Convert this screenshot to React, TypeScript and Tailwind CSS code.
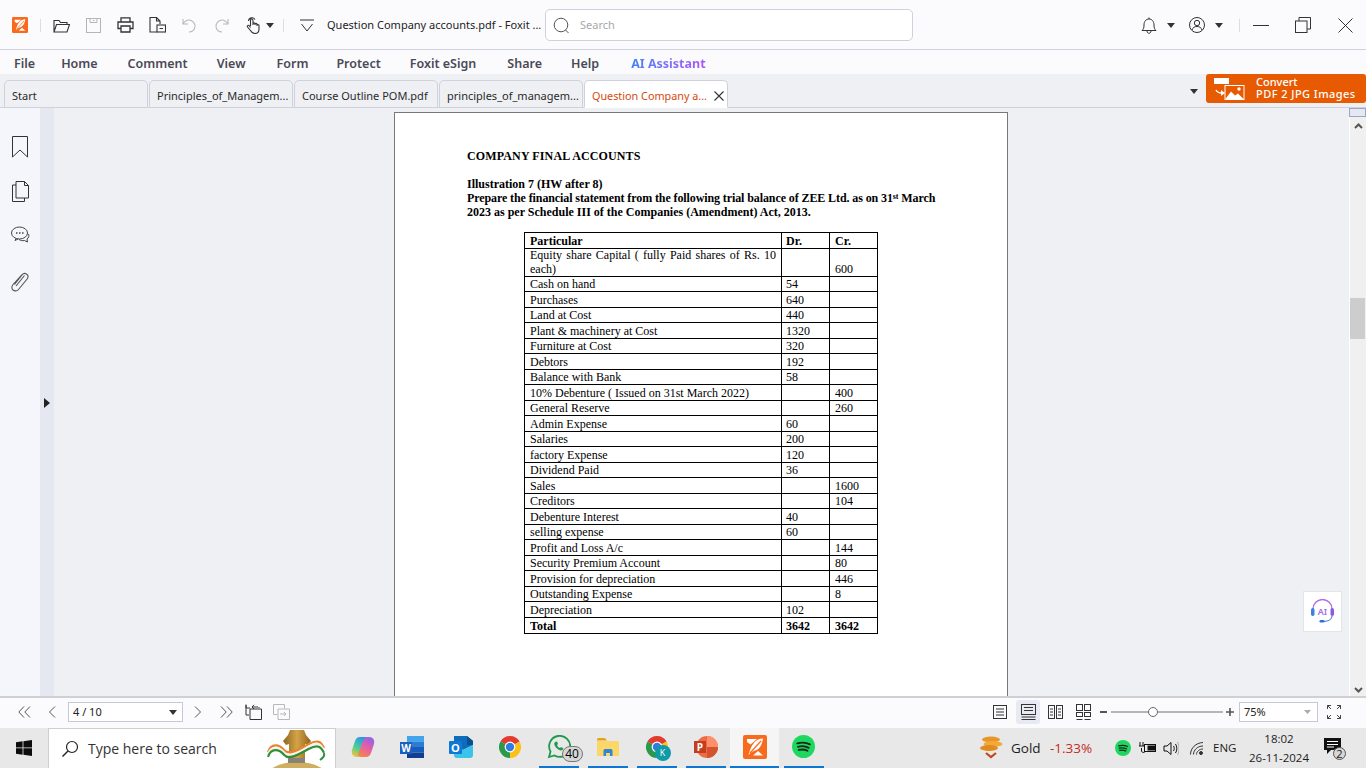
import React from "react";

const UI = "[font-family:'Noto_Sans',sans-serif]";
const SERIF = "[font-family:'Liberation_Serif',serif]";

type R = { p: string; d?: string; c?: string; bold?: boolean };
const rows: R[] = [
  { p: "Cash on hand", d: "54" },
  { p: "Purchases", d: "640" },
  { p: "Land at Cost", d: "440" },
  { p: "Plant & machinery at Cost", d: "1320" },
  { p: "Furniture at Cost", d: "320" },
  { p: "Debtors", d: "192" },
  { p: "Balance with Bank", d: "58" },
  { p: "10% Debenture ( Issued on 31st March 2022)", c: "400" },
  { p: "General Reserve", c: "260" },
  { p: "Admin Expense", d: "60" },
  { p: "Salaries", d: "200" },
  { p: "factory Expense", d: "120" },
  { p: "Dividend Paid", d: "36" },
  { p: "Sales", c: "1600" },
  { p: "Creditors", c: "104" },
  { p: "Debenture Interest", d: "40" },
  { p: "selling expense", d: "60" },
  { p: "Profit and Loss A/c", c: "144" },
  { p: "Security Premium Account", c: "80" },
  { p: "Provision for depreciation", c: "446" },
  { p: "Outstanding Expense", c: "8" },
  { p: "Depreciation", d: "102" },
  { p: "Total", d: "3642", c: "3642", bold: true },
];

function Caret({ className = "" }: { className?: string }) {
  return (
    <svg width="8" height="5" viewBox="0 0 8 5" className={className}>
      <path d="M0 0h8L4 5z" fill="#333" />
    </svg>
  );
}

function Ic({ w, h, vb, ml, children, cls = "" }: { w: number; h: number; vb?: string; ml?: string; children: React.ReactNode; cls?: string }) {
  return (
    <svg width={w} height={h} viewBox={vb ?? `0 0 ${w} ${h}`} fill="none" stroke="#333" strokeWidth="1" className={`shrink-0 ${ml ?? ""} ${cls}`}>
      {children}
    </svg>
  );
}

function FoxitLogo({ size }: { size: number }) {
  return (
    <svg width={size} height={size} viewBox="0 0 24 24" className="shrink-0">
      <rect width="24" height="24" rx="2" fill="#f96b1c" />
      <path d="M20 3.500c-7 .5-11 4-14.500 16.500 2.500-3 5-4 8-5 3.500-1.500 5.500-5.500 6.500-11.500z" fill="#fff" />
      <path d="M4 4h10L7.500 9.500 4 7z" fill="#fff" />
      <path d="M15 16l5 4.500H10z" fill="#fff" />
      <path d="M18 6L7 18" stroke="#f96b1c" strokeWidth="1.200" />
    </svg>
  );
}

function Chrome({ size = 24 }: { size?: number }) {
  return (
    <svg width={size} height={size} viewBox="0 0 24 24" className="shrink-0">
      <path d="M12 12L2.470 6.500A11 11 0 0 1 21.530 6.500Z" fill="#e33b2e" />
      <path d="M12 12L21.530 6.500A11 11 0 0 1 12 23Z" fill="#fbc117" />
      <path d="M12 12L12 23A11 11 0 0 1 2.470 6.500Z" fill="#2a9a4a" />
      <circle cx="12" cy="12" r="5.400" fill="#fff" />
      <circle cx="12" cy="12" r="4.200" fill="#2f7de1" />
    </svg>
  );
}

function Spotify({ size }: { size: number }) {
  return (
    <svg width={size} height={size} viewBox="0 0 24 24" fill="none" className="shrink-0">
      <circle cx="12" cy="12" r="12" fill="#1ed760" />
      <path d="M5.500 8.800c4.500-1.300 9.500-1 13.200 1M6.200 12.300c3.800-1 8-.7 11.200 1.100M7 15.600c3.200-.8 6.500-.5 9.200.9" stroke="#14261a" strokeWidth="1.900" strokeLinecap="round" />
    </svg>
  );
}

function Tab({ label, active }: { label: string; active?: boolean }) {
  return (
    <div className={`relative flex items-center h-[28px] w-[144px] pl-[7px] pt-[5px] rounded-t-[5px] border border-[#cfd1dc] -mb-px ${active ? "text-[10.800px] bg-white border-b-white text-[#d4490c]" : "text-[11px] bg-[#eff0f4] text-[#2a2a2a]"}`}>
      <span className="whitespace-nowrap">{label}</span>
      {active && (
        <svg width="10" height="10" viewBox="0 0 10 10" className="absolute right-[3px] top-[10px]">
          <path d="M.5.500l9 9M9.500.500l-9 9" stroke="#333" strokeWidth="1.100" />
        </svg>
      )}
    </div>
  );
}

function Cell({ w, children, last, pl }: { w?: string; children?: React.ReactNode; last?: boolean; pl?: string }) {
  return (
    <div className={`${w ?? ""} ${last ? "flex-1 pl-[5px]" : "border-r border-black"} ${pl ?? (last ? "" : "pl-[4px]")} self-stretch flex items-end`}>
      <span className="leading-[14px] block">{children}</span>
    </div>
  );
}

function Page() {
  return (
    <div className={`w-[614px] h-[600px] shrink-0 bg-white border border-[#777] border-b-0 mt-[4px] pl-[72px] pt-[36px] text-black text-[12px] leading-[14px] ${SERIF}`}>
      <div className="font-bold h-[14px] tracking-[0.13px]">COMPANY FINAL ACCOUNTS</div>
      <div className="font-bold h-[14px] mt-[14px]">Illustration 7 (HW after 8)</div>
      <div className="font-bold h-[14px] w-[468px] whitespace-nowrap tracking-[-0.1px]">
        Prepare the financial statement from the following trial balance of ZEE Ltd. as on 31<span className="text-[8px] relative -top-[3px]">st</span> March
      </div>
      <div className="font-bold h-[14px]">2023 as per Schedule III of the Companies (Amendment) Act, 2013.</div>
      <div className="ml-[57px] mt-[13px] w-[354px] border border-black">
        <div className="flex h-[16px] border-b border-black font-bold">
          <Cell w="w-[257px]" pl="pl-[5px]">Particular</Cell>
          <Cell w="w-[48px]">Dr.</Cell>
          <Cell last>Cr.</Cell>
        </div>
        <div className="flex h-[27.9px] border-b border-black">
          <div className="w-[257px] border-r border-black pl-[5px] pr-[5px] leading-[14px]">
            <div className="-mt-[1px] text-justify [text-align-last:justify]">Equity share Capital ( fully Paid shares of Rs. 10</div>
            <div>each)</div>
          </div>
          <Cell w="w-[48px]" />
          <Cell last>600</Cell>
        </div>
        {rows.map((r, i) => (
          <div key={r.p} className={`flex h-[15.5px] ${i < rows.length - 1 ? "border-b border-black" : ""} ${r.bold ? "font-bold" : ""}`}>
            <Cell w="w-[257px]" pl="pl-[5px]">{r.p}</Cell>
            <Cell w="w-[48px]">{r.d}</Cell>
            <Cell last>{r.c}</Cell>
          </div>
        ))}
      </div>
    </div>
  );
}

function TopBar() {
  return (
    <div className="flex items-center h-[50px] pt-[1px] border-b border-[#cfd1dc] bg-[#fbfbfd] text-[#222]">
      <div className="ml-[12px]"><FoxitLogo size={16} /></div>
      <div className="ml-[12px] w-px h-[13px] bg-[#dcdde3]" />
      <Ic w={17} h={15} ml="ml-[12px]"><path d="M1 14V2.500h5l1.500 2H14v2M1 14l2.500-7.500H16.500L14 14z" strokeWidth="1.100" /></Ic>
      <Ic w={15} h={15} ml="ml-[16px]"><g stroke="#b5b5b5"><rect x=".5" y=".5" width="14" height="14" /><path d="M4 .5v4h7v-4M7 2.500h1.500" /></g></Ic>
      <Ic w={17} h={16} ml="ml-[16px]"><path d="M4 5V.8h9V5M4 11.500H1V5h15v6.500h-3M4 9h9v6H4z" strokeWidth="1.300" /></Ic>
      <Ic w={17} h={16} ml="ml-[15px]"><path d="M8 15H1V.5h6.500L11 4v3M7.500.5V4H11" strokeWidth="1.100" /><rect x="8" y="8" width="8.500" height="7" strokeWidth="1.100" /><path d="M10.500 11.500h3.500" /></Ic>
      <Ic w={14} h={15} ml="ml-[16px]"><g stroke="#b8b8b8" strokeWidth="1.100"><path d="M1 1v5h5M1 6c2-3 4-4 6-4 3 0 6 3 6 6 0 3.500-2.500 6-6 6" /></g></Ic>
      <Ic w={14} h={15} ml="ml-[19px]"><g stroke="#b8b8b8" strokeWidth="1.100"><path d="M13 1v5H8M13 6c-2-3-4-4-6-4-3 0-6 3-6 6 0 3.500 2.500 6 6 6" /></g></Ic>
      <Ic w={14} h={17} ml="ml-[17px]"><path d="M4.500 9V3.500c0-2 2.500-2 2.500 0V8m0-1c0-1.500 2-1.500 2 0v1m0-.5c0-1.500 2-1.500 2 0V9m0-.5c0-1.500 2-1 2 0V12c0 3-2 4.500-4 4.500-2.500 0-3.500-1-4.500-3L1.500 10c-.8-1.500 1-2.500 2-1l1 1.500M2.500 4a3.500 3.500 0 0 1 6.500-1.500" strokeWidth="1.100" /></Ic>
      <Caret className="ml-[6px]" />
      <div className="ml-[9px] w-px h-[13px] bg-[#dcdde3]" />
      <Ic w={14} h={13} ml="ml-[16px]"><path d="M0 1h14M1.500 5L7 12l5.500-7" /></Ic>
      <div className="ml-[13px] w-[210px] text-[11px] whitespace-nowrap">Question Company accounts.pdf - Foxit ...</div>
      <div className="ml-[8px] w-[368px] h-[32px] flex items-center border border-[#cfd1dc] rounded-[5px] bg-white">
        <Ic w={17} h={17} ml="ml-[7px]"><circle cx="8" cy="8" r="6.800" stroke="#555" /><path d="M12.500 13l3 3" stroke="#555" /></Ic>
        <span className="ml-[10px] text-[11px] text-[#a8a8a8]">Search</span>
      </div>
      <Ic w={16} h={17} ml="ml-[228px]"><path d="M1 13.500c1.500-1.500 2-2.500 2-5.500 0-3.500 2-6 5-6s5 2.500 5 6c0 3 .5 4 2 5.500zM6 14c0 3 4 3 4 0M8 .5v1.500" /></Ic>
      <Caret className="ml-[10px]" />
      <Ic w={16} h={16} ml="ml-[14px]"><circle cx="8" cy="8" r="7.500" /><circle cx="8" cy="6" r="2.700" /><path d="M3 13c.8-2.500 2.500-3.500 5-3.500s4.200 1 5 3.500" /></Ic>
      <Caret className="ml-[10px]" />
      <div className="ml-[16px] w-px h-[13px] bg-[#dcdde3]" />
      <div className="ml-[13px] w-[16px] h-px bg-[#333]" />
      <Ic w={16} h={16} ml="ml-[26px]"><rect x=".5" y="4" width="11.500" height="11.500" /><path d="M4 4V.5h11.500V12H12" /></Ic>
      <Ic w={15} h={15} ml="ml-[27px]"><path d="M.5.500l14 14M14.500.500l-14 14" /></Ic>
    </div>
  );
}

function MenuBar() {
  return (
    <div className="flex items-center h-[24px] bg-[#fbfbfd] text-[12.500px] font-semibold text-[#4a4a56] pt-[5px]">
      <span className="ml-[14px]">File</span>
      <span className="ml-[26px]">Home</span>
      <span className="ml-[30px]">Comment</span>
      <span className="ml-[29px]">View</span>
      <span className="ml-[31px]">Form</span>
      <span className="ml-[28px]">Protect</span>
      <span className="ml-[29px]">Foxit eSign</span>
      <span className="ml-[31px]">Share</span>
      <span className="ml-[29px]">Help</span>
      <span className="ml-[32px] font-bold bg-gradient-to-r from-[#3b82f6] to-[#a855f7] bg-clip-text text-transparent">AI Assistant</span>
    </div>
  );
}

function TabStrip() {
  return (
    <div className="flex items-end h-[34px] bg-[#eff0f4] border-b border-[#cfd1dc] pl-[4px] relative">
      <div className="flex gap-[1px]">
        <Tab label="Start" />
        <Tab label="Principles_of_Managem..." />
        <Tab label="Course Outline POM.pdf" />
        <Tab label="principles_of_managem..." />
        <Tab label="Question Company a..." active />
      </div>
      <div className="flex-1" />
      <div className="self-start flex items-center">
        <Caret className="mr-[8px] mt-[6px]" />
        <div className="w-[160px] h-[29px] bg-[#e85a02] rounded-[3px] flex items-center text-white">
          <svg width="32" height="24" viewBox="0 0 32 24" className="ml-[8px] shrink-0">
            <rect x="0" y="1" width="15" height="6" fill="#fff" />
            <path d="M2 13c1 2 3 3 6 3" stroke="#fff" strokeWidth="1.500" fill="none" />
            <path d="M7 13l4 3-4 3z" fill="#fff" />
            <rect x="11" y="8.500" width="19" height="14" fill="none" stroke="#fff" />
            <path d="M11 22.500l6-8 4 4 3-2 6 6z" fill="#fff" />
            <circle cx="25" cy="12" r="1.700" fill="#fff" />
          </svg>
          <div className="ml-[10px] pb-[2px] text-[11px] font-medium leading-[12px] whitespace-nowrap">
            <div>Convert</div>
            <div className="tracking-[0.45px]">PDF 2 JPG Images</div>
          </div>
        </div>
      </div>
    </div>
  );
}

function Sidebar() {
  return (
    <div className="w-[40px] shrink-0 bg-[#f5f6fb] flex flex-col items-center pt-[28px]">
      <svg width="16" height="22" viewBox="0 0 16 22" fill="none" stroke="#333"><path d="M1 .5h14.500v20.500L8 14 .5 21V.5z" /></svg>
      <svg width="17" height="21" viewBox="0 0 17 21" fill="none" stroke="#333" className="mt-[23px]"><path d="M4 4H.5v16.500h12V17M4 .5V17h12.500V4.500l-4-4zM12.500.5v4h4" /></svg>
      <svg width="19" height="18" viewBox="0 0 19 18" fill="none" stroke="#444" className="mt-[24px]"><ellipse cx="8.500" cy="7" rx="8" ry="6" /><path d="M5 12.500l-1 2 3-1.500M17.500 8c1 2 0 4-1.500 5l.5 3-3-1.500c-2 .5-4 0-5.500-1" /><path d="M5 7h1.500M8 7h1.500M11 7h1.500" strokeWidth="1.400" /></svg>
      <svg width="18" height="20" viewBox="0 0 18 20" fill="none" stroke="#555" className="mt-[28px]"><path d="M3.500 12.500L11 3c2.500-3.500 7.500-.5 5.500 3.500L7.500 17.500c-2 2.500-7.500 1.500-6.500-3 .2-1 .8-1.700 1.500-2.500L11 2.500M5 14l8.500-10.500" strokeWidth="1.100" /></svg>
    </div>
  );
}

function Scrollbar() {
  return (
    <div className="w-[17px] shrink-0 bg-[#f0f0f0] border-l border-white flex flex-col relative">
      <div className="h-[9px] w-[17px] -ml-px bg-[#e4e8f4] border border-[#a1a5bb]" />
      <svg width="9" height="6" viewBox="0 0 9 6" className="ml-[4px] mt-[6px]"><path d="M1 5l3.500-3.500L8 5" stroke="#555" strokeWidth="2" fill="none" /></svg>
      <div className="mt-[169px] h-[41px] w-[15px] bg-[#cdcdcd]" />
      <div className="flex-1" />
      <svg width="9" height="6" viewBox="0 0 9 6" className="ml-[4px] mb-[3px]"><path d="M1 1l3.500 3.500L8 1" stroke="#555" strokeWidth="2" fill="none" /></svg>
    </div>
  );
}

function Main() {
  return (
    <div className="flex h-[588px] relative overflow-hidden">
      <Sidebar />
      <div className="w-[14px] shrink-0 bg-[#e6e8f1] flex items-center pl-[4px] pt-[2px]">
        <svg width="6" height="10" viewBox="0 0 6 10"><path d="M0 0l6 5-6 5z" fill="#222" /></svg>
      </div>
      <div className="flex-1 bg-[#eff0f4] flex justify-center overflow-hidden pr-[1px]">
        <Page />
      </div>
      <Scrollbar />
      <div className="absolute left-[1303px] top-[483px] w-[39px] h-[41px] bg-white border border-[#e4e5ea] flex items-center justify-center">
        <svg width="25" height="25" viewBox="0 0 25 25" fill="none">
          <path d="M3 13V10a9.500 9.500 0 0 1 19 0v3" stroke="#b06ae8" strokeWidth="1.300" />
          <rect x="1" y="9" width="3.500" height="8" rx="1.700" fill="#3f7fe0" />
          <rect x="20.500" y="9" width="3.500" height="8" rx="1.700" fill="#8a5ce6" />
          <path d="M22 17c0 3-3 5-8 5.500" stroke="#2f6fd6" />
          <rect x="9.500" y="21" width="5" height="2.600" rx="1.300" fill="#2f6fd6" />
          <text x="12.500" y="16" textAnchor="middle" fontSize="9" fontWeight="600" fill="#9b6cf0" stroke="none" fontFamily="Noto Sans">AI</text>
        </svg>
      </div>
    </div>
  );
}

function BottomBar() {
  return (
    <div className="flex items-center h-[32px] pb-[2px] border-t-2 border-[#cfd0d6] bg-[#fbfbfd] text-[#222]">
      <Ic w={13} h={12} ml="ml-[18px]"><path d="M6 .5L.8 6 6 11.500M12 .5L6.800 6 12 11.500" stroke="#555" /></Ic>
      <Ic w={8} h={12} ml="ml-[17px]"><path d="M7 .5L1.500 6 7 11.500" stroke="#555" /></Ic>
      <div className="ml-[12px] w-[115px] h-[20px] bg-white border border-[#c4c8d8] flex items-center pl-[4px] pr-[5px] text-[11px] justify-between">
        <span>4 / 10</span><Caret />
      </div>
      <Ic w={8} h={12} ml="ml-[11px]"><path d="M1 .5L6.500 6 1 11.500" stroke="#555" /></Ic>
      <Ic w={13} h={12} ml="ml-[18px]"><path d="M1 .5L6.200 6 1 11.500M7 .5L12.200 6 7 11.500" stroke="#555" /></Ic>
      <Ic w={17} h={16} ml="ml-[12px]"><path d="M5 4H1V.5M1 1v10h3M5 5h11.500v10.500H5zM7 3h6M9 .8L7 3l2 2M14 3v1" /></Ic>
      <Ic w={17} h={16} ml="ml-[11px]"><g stroke="#b8b8b8"><path d="M.5.500h11v4M.5.500v10h4M5 5h11.500v10.500H5zM7 10h6M11 8l2 2-2 2" /></g></Ic>

      <div className="flex-1" />

      <Ic w={14} h={14} ml="mr-[9px]"><rect x=".5" y=".5" width="13" height="13" /><path d="M3 4h8M3 7h8M3 10h8" /></Ic>
      <div className="w-[24px] h-[24px] rounded-[3px] bg-[#e7eaf2] flex items-center justify-center mr-[8px]">
        <Ic w={15} h={16}><rect x=".5" y=".5" width="14" height="10" /><path d="M3 3.500h9M3 6.500h9M.5 13h14M.5 15.500h14" /></Ic>
      </div>
      <Ic w={15} h={14} ml="mr-[13px]"><rect x=".5" y=".5" width="6" height="13" /><rect x="8.500" y=".5" width="6" height="13" /><path d="M2 4h3M2 7h3M2 10h3M10 4h3M10 7h3M10 10h3" /></Ic>
      <Ic w={15} h={16} ml="mr-[9px]"><rect x=".5" y=".5" width="6" height="6" /><rect x="8.500" y=".5" width="6" height="6" /><rect x=".5" y="8.500" width="6" height="4" /><rect x="8.500" y="8.500" width="6" height="4" /><path d="M.5 15.500h6M8.500 15.500h6" /></Ic>
      <div className="w-[7px] h-[2px] bg-[#555] mr-[4px]" />
      <div className="w-[112px] h-[2px] bg-[#b5b5b5] relative mr-[3px]">
        <div className="absolute left-[37px] -top-[4px] w-[10px] h-[10px] rounded-full bg-white border border-[#666]" />
      </div>
      <svg width="8" height="8" viewBox="0 0 8 8" className="mr-[5px]"><path d="M4 0v8M0 4h8" stroke="#555" strokeWidth="1.600" /></svg>
      <div className="w-[79px] h-[20px] bg-white border border-[#c4c8d8] flex items-center justify-between pl-[4px] pr-[6px] text-[11px] mr-[9px]">
        <span>75%</span>
        <svg width="7" height="4" viewBox="0 0 7 4"><path d="M0 0h7L3.500 4z" fill="#aaa" /></svg>
      </div>
      <Ic w={14} h={14} ml="mr-[25px]"><path d="M.5 4V.5H4M.5.500L4 4M10 .5h3.500V4M13.500.500L10 4M.5 10v3.500H4M.5 13.500L4 10M13.500 10v3.500H10M13.500 13.500L10 10" stroke="#444" /></Ic>
    </div>
  );
}

function Slot({ children, on, active }: { children?: React.ReactNode; on?: boolean; active?: boolean }) {
  return (
    <div className={`relative w-[49px] h-[40px] flex items-center justify-center pb-[3px] ${active ? "bg-[#f5f5f5]" : ""}`}>
      {children}
      {on && <div className={`absolute bottom-0 h-[2px] bg-[#0a78d4] ${active ? "left-0 right-0" : "left-[5px] right-[4px]"}`} />}
    </div>
  );
}

function Taskbar() {
  return (
    <div className="flex items-stretch h-[40px] bg-[#e8e8e8] text-[#1c1c1c] overflow-hidden [font-family:'Open_Sans',sans-serif]">
      <div className="w-[48px] flex items-center justify-center">
        <svg width="16" height="16" viewBox="0 0 16 16" fill="#0c0c0c"><path d="M0 2.200L6.600 1.300V7.500H0zM7.400 1.200L16 0V7.500H7.400zM0 8.300H6.600V14.700L0 13.800zM7.400 8.300H16V16L7.400 14.800z" /></svg>
      </div>
      <div className="w-[288px] bg-white border border-[#cfcfcf] border-b-0 flex items-center relative overflow-hidden">
        <svg width="18" height="18" viewBox="0 0 18 18" fill="none" stroke="#222" className="ml-[12px]"><circle cx="11" cy="7" r="5.500" strokeWidth="1.200" /><path d="M7 11L1.500 16.500" strokeWidth="1.400" /></svg>
        <span className="ml-[9px] text-[14px] text-[#333]">Type here to search</span>
        <svg width="64" height="40" viewBox="0 0 64 40" fill="none" className="absolute left-[216px] top-0">
          <defs>
            <linearGradient id="gold" x1="0" y1="0" x2="1" y2="0"><stop offset="0" stopColor="#8f6420" /><stop offset=".5" stopColor="#d4a447" /><stop offset="1" stopColor="#8f6420" /></linearGradient>
          </defs>
          <ellipse cx="32" cy="50" rx="32" ry="17" fill="#cfae5e" />
          <rect x="23" y="29" width="17" height="5" fill="#8a8278" />
          <path d="M25 1h14l2 5 5 6-3 4-3-1v14H24V15l-3 1-3-4 5-6z" fill="url(#gold)" />
          <path d="M3 23C6 14 14 15 19 21S35 20 44 15S56 13 59 19" stroke="#e9842c" strokeWidth="2.200" />
          <path d="M3 25.400C6 16.400 14 17.400 19 23.400S35 22.400 44 17.400S56 15.400 59 21.400" stroke="#f7f3ea" strokeWidth="2.200" />
          <path d="M3 27.800C6 18.800 14 19.800 19 25.800S35 24.800 44 19.800S56 17.800 59 23.800" stroke="#2f8f3c" strokeWidth="2.200" />
          <path d="M59 24c1 3-1 5-4 7" stroke="#2f8f3c" strokeWidth="2" />
        </svg>
      </div>
      <div className="w-[2px]" />
      <Slot>
        <svg width="24" height="24" viewBox="0 0 24 24">
          <defs>
            <linearGradient id="cpA" x1="0.7" y1="0" x2="0.2" y2="1"><stop offset="0" stopColor="#2a8ff0" /><stop offset=".55" stopColor="#45cf9a" /><stop offset="1" stopColor="#f5c33b" /></linearGradient>
            <linearGradient id="cpB" x1="0.7" y1="0" x2="0.2" y2="1"><stop offset="0" stopColor="#f2854a" /><stop offset=".45" stopColor="#ea5fa0" /><stop offset="1" stopColor="#8a63ee" /></linearGradient>
          </defs>
          <path d="M9 2h5c1.500 0 2.500 1 3 2.500L12 18c-.5 2-2 4-4.500 4H6c-4 0-6-3-5-7L4 6C5 3.500 6.500 2 9 2z" fill="url(#cpA)" />
          <path d="M9 2h5c1.500 0 2.500 1 3 2.500L12 18c-.5 2-2 4-4.500 4H6c-4 0-6-3-5-7L4 6C5 3.500 6.500 2 9 2z" fill="url(#cpB)" transform="rotate(180 12 12)" />
        </svg>
      </Slot>
      <Slot>
        <svg width="24" height="22" viewBox="0 0 24 22">
          <rect x="7" y="0" width="17" height="5.500" fill="#41a5ee" /><rect x="7" y="5.500" width="17" height="5.500" fill="#2b7cd3" /><rect x="7" y="11" width="17" height="5.500" fill="#185abd" /><rect x="7" y="16.500" width="17" height="5.500" fill="#103f91" />
          <rect x="0" y="6" width="12" height="12" fill="#1a5fbf" />
          <text x="6" y="15.500" textAnchor="middle" fontSize="10" fontWeight="700" fill="#fff" fontFamily="Open Sans">W</text>
        </svg>
      </Slot>
      <Slot>
        <svg width="24" height="22" viewBox="0 0 24 22">
          <path d="M5 0h13l6 5v4l-10 5-9-5z" fill="#0f6cbd" />
          <path d="M5 9l9 5 10-5v10a3 3 0 0 1-3 3H8a3 3 0 0 1-3-3z" fill="#3bc4ea" />
          <path d="M18 0l6 5v4h-6z" fill="#0a4f8f" />
          <rect x="0" y="5" width="13" height="13" rx="1" fill="#0f78d4" />
          <text x="6.500" y="15.500" textAnchor="middle" fontSize="11" fontWeight="700" fill="#fff" fontFamily="Open Sans">O</text>
        </svg>
      </Slot>
      <Slot><Chrome /></Slot>
      <Slot on>
        <div className="relative w-[24px] h-[24px]">
          <svg width="24" height="24" viewBox="0 0 24 24" fill="none">
            <path d="M2 22l1.500-5.500A10.500 10.500 0 1 1 7.500 20.500z" stroke="#1d9a4a" strokeWidth="1.800" />
            <path d="M8 7c-1.500 1.500-.5 4 1.500 6s4.500 3 6 2l1-1.500-2.500-1.500-1 1c-1.500-.5-2.500-1.500-3-3l1-1L10 6.500z" fill="#1d9a4a" />
          </svg>
          <span className="absolute left-[15px] top-[11px] w-[21px] h-[16px] rounded-full bg-[#d6d6d6] border border-[#777] text-[12px] leading-[14px] text-center text-black">40</span>
        </div>
      </Slot>
      <Slot on>
        <svg width="22" height="18" viewBox="0 0 22 18">
          <path d="M0 1.500A1.500 1.500 0 0 1 1.500 0H8l2 2.500H0z" fill="#e3a417" />
          <path d="M0 3h20.500A1.500 1.500 0 0 1 22 4.500V16.500A1.500 1.500 0 0 1 20.500 18H1.500A1.500 1.500 0 0 1 0 16.500z" fill="#fcd768" />
          <path d="M8 11h6a1.500 1.500 0 0 1 1.500 1.500V18H13v-3H9v3H6.500v-5.500A1.500 1.500 0 0 1 8 11z" fill="#2b88d8" />
        </svg>
      </Slot>
      <Slot on>
        <div className="relative w-[24px] h-[24px]">
          <Chrome />
          <span className="absolute left-[10px] top-[10px] w-[16px] h-[16px] rounded-full bg-[#0f9aa8] text-white text-[9px] leading-[16px] text-center">K</span>
        </div>
      </Slot>
      <Slot on>
        <svg width="24" height="22" viewBox="0 0 24 22">
          <circle cx="13" cy="11" r="11" fill="#ed6c47" />
          <path d="M13 0a11 11 0 0 1 11 11H13z" fill="#ff8f6b" />
          <path d="M13 11h11a11 11 0 0 1-11 11z" fill="#d35230" />
          <rect x="0" y="5" width="12" height="12" fill="#c43e1c" />
          <text x="6" y="14.500" textAnchor="middle" fontSize="10" fontWeight="700" fill="#fff" fontFamily="Open Sans">P</text>
        </svg>
      </Slot>
      <Slot on active><FoxitLogo size={24} /></Slot>
      <Slot on><Spotify size={23} /></Slot>

      <div className="flex-1" />

      <div className="flex items-center relative">
        <svg width="23" height="24" viewBox="0 0 23 24" className="mr-[8px]">
          <ellipse cx="11" cy="3.500" rx="9" ry="3" fill="#e8962a" /><ellipse cx="13" cy="8" rx="9.500" ry="3" fill="#f2a93a" /><ellipse cx="9" cy="12" rx="9" ry="3" fill="#e08a20" />
          <path d="M6 17l5 4 5-4" stroke="#c0461c" strokeWidth="2.200" fill="none" />
        </svg>
        <span className="text-[13.500px] w-[39px]">Gold</span>
        <span className="text-[13.500px] text-[#c42b1c] w-[65px]">-1.33%</span>
        <Spotify size={16} />
        <svg width="17" height="14" viewBox="0 0 17 14" fill="none" stroke="#111" className="ml-[8px]"><rect x="5.500" y="3.500" width="11" height="7" /><rect x="9" y="5" width="7" height="4" fill="#111" /><path d="M1 1v4M4 1v4M0 5h5M2.500 7v3c0 1 1 1.500 3 1.500" /></svg>
        <svg width="16" height="15" viewBox="0 0 16 15" fill="none" stroke="#111" className="ml-[7px]"><path d="M1 5h3l4-3.500v12L4 10H1zM10.500 5c1 1.500 1 3.500 0 5M12.500 3c1.800 2.500 1.800 6.500 0 9" /><path d="M14.500 1c2 3 2 10 0 13" stroke="#aaa" /></svg>
        <svg width="14" height="13" viewBox="0 0 14 13" fill="none" stroke="#333" className="ml-[11px]"><path d="M.5 12.500C.5 6 6 .8 13 .5M3.500 12.500c0-4.500 4-8.500 9.500-8.500M6.500 12.500c0-3 3-5.500 6.500-5.500" /><circle cx="11" cy="11" r="1.500" fill="#333" /></svg>
        <span className="text-[11.500px] ml-[9px] w-[23px]">ENG</span>
        <div className="ml-[13px] w-[60px] text-center text-[11.500px] leading-[19px]">
          <div>18:02</div>
          <div>26-11-2024</div>
        </div>
        <div className="relative ml-[15px] mr-[20px] w-[22px] h-[24px]">
          <svg width="17" height="17" viewBox="0 0 17 17" className="absolute left-0 top-[2px]"><path d="M0 0h17v12H7l-4 4v-4H0z" fill="#111" /><path d="M3 3.500h11M3 6.500h11M3 9h7" stroke="#fff" /></svg>
          <span className="absolute left-[9px] top-[11px] w-[13px] h-[13px] rounded-full bg-[#d6d6d6] border border-[#555] text-[11px] leading-[11px] text-center">2</span>
        </div>
      </div>
    </div>
  );
}

export default function App() {
  return (
    <div className={`w-[1366px] h-[768px] overflow-hidden flex flex-col ${UI}`}>
      <TopBar />
      <MenuBar />
      <TabStrip />
      <Main />
      <BottomBar />
      <Taskbar />
    </div>
  );
}
